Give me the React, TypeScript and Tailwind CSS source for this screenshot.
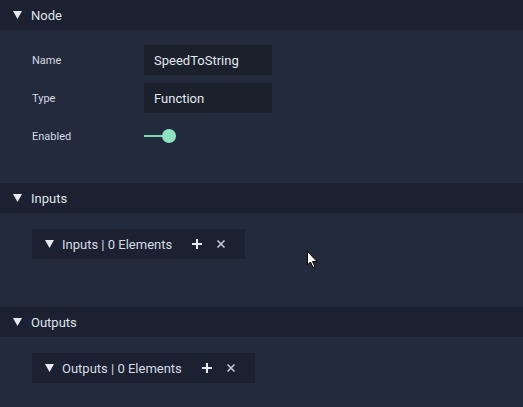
import React, { useState } from 'react';

const Caret = ({ className }: { className?: string }) => (
  <svg className={className} width="9" height="8" viewBox="0 0 9 8">
    <path d="M0 0 L9 0 L4.5 8 Z" fill="#e6e9ef" />
  </svg>
);

const SectionHeader = ({ title }: { title: string }) => (
  <div className="flex h-[30px] items-center bg-[#1b2130] pl-[13px]">
    <Caret />
    <span className="ml-[9px] pt-[2px] text-[13px] text-[#dfe3ea]">{title}</span>
  </div>
);

const ListBox = ({ label, width }: { label: string; width: string }) => (
  <div className={`flex h-[30px] items-center bg-[#1b2130] pl-[13px] ${width}`}>
    <Caret />
    <span className="ml-[8px] pt-[2px] text-[13px] text-[#d6dbe4]">{label}</span>
    <svg className="ml-[20px]" width="10" height="10" viewBox="0 0 10 10">
      <path d="M5 0 V10 M0 5 H10" stroke="#e6e9ef" strokeWidth="2" />
    </svg>
    <svg className="ml-[15px]" width="8" height="8" viewBox="0 0 8 8">
      <path d="M0.5 0.5 L7.5 7.5 M7.5 0.5 L0.5 7.5" stroke="#c9ced8" strokeWidth="1.5" />
    </svg>
  </div>
);

const Field = ({ label, value }: { label: string; value: string }) => (
  <div className="flex items-center">
    <span className="w-[112px] pt-[2px] text-[11px] text-[#d6dbe4]">{label}</span>
    <div className="flex h-[30px] w-[128px] items-center bg-[#1a202c] pl-[10px] pt-[2px] text-[13px] text-[#e3e7ee]">
      {value}
    </div>
  </div>
);

export default function App() {
  const [enabled] = useState(true);

  return (
    <div
      className="relative h-[407px] w-[523px] overflow-hidden bg-[#222a3b]"
      style={{ fontFamily: 'Roboto, "Noto Sans", sans-serif' }}
    >
      <SectionHeader title="Node" />
      <div className="flex h-[153px] flex-col gap-[8px] pl-[32px] pt-[15px]">
        <Field label="Name" value="SpeedToString" />
        <Field label="Type" value="Function" />
        <div className="flex h-[30px] items-center">
          <span className="w-[112px] pt-[2px] text-[11px] text-[#d6dbe4]">Enabled</span>
          <div className="relative flex h-[14px] w-[32px] items-center">
            <div className="h-[2px] w-[20px] bg-[#7fd8b6]" />
            {enabled && (
              <div className="absolute left-[18px] h-[14px] w-[14px] rounded-full bg-[#8ee3c1]" />
            )}
          </div>
        </div>
      </div>

      <SectionHeader title="Inputs" />
      <div className="h-[94px] pl-[32px] pt-[16px]">
        <ListBox label="Inputs | 0 Elements" width="w-[213px]" />
      </div>

      <SectionHeader title="Outputs" />
      <div className="pl-[32px] pt-[16px]">
        <ListBox label="Outputs | 0 Elements" width="w-[223px]" />
      </div>

      <svg className="absolute left-[307px] top-[251px]" width="12" height="18" viewBox="0 0 12 18">
        <path d="M0.5 0.5 L0.5 14 L3.5 11 L6 16.5 L8 15.5 L5.5 10.5 L10 10.5 Z" fill="#ffffff" stroke="#000000" strokeWidth="1" />
      </svg>
    </div>
  );
}
